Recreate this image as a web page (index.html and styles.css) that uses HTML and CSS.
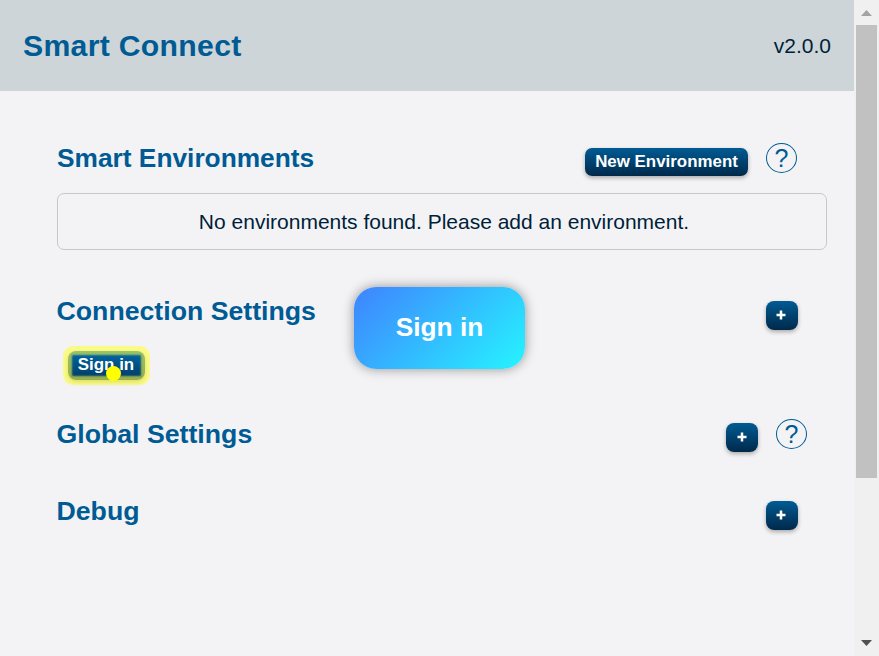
FILE: index.html
```html
<!DOCTYPE html>
<html lang="en">
<head>
<meta charset="utf-8">
<title>Smart Connect</title>
<link rel="stylesheet" href="styles.css">
</head>
<body>
<div class="app">
  <div class="page">
    <header class="header">
      <h1>Smart Connect</h1>
      <span class="version">v2.0.0</span>
    </header>
    <main>
      <section class="row environments">
        <h2>Smart Environments</h2>
        <button class="btn new">New Environment</button>
        <span class="help">?</span>
      </section>
      <div class="empty">No environments found. Please add an environment.</div>
      <section class="row connection">
        <h2>Connection Settings</h2>
        <button class="btn plus"><svg viewBox="0 0 10 10"><path d="M5 .5v9M.5 5h9"/></svg></button>
      </section>
      <div class="signin-row"><button class="btn signin">Sign in</button></div>
      <section class="row global">
        <h2>Global Settings</h2>
        <button class="btn plus"><svg viewBox="0 0 10 10"><path d="M5 .5v9M.5 5h9"/></svg></button>
        <span class="help">?</span>
      </section>
      <section class="row debug">
        <h2>Debug</h2>
        <button class="btn plus"><svg viewBox="0 0 10 10"><path d="M5 .5v9M.5 5h9"/></svg></button>
      </section>
    </main>
  </div>
  <div class="scrollbar">
    <svg class="arrow up" viewBox="0 0 11 6"><path d="M0 6L5.5 0L11 6z"/></svg>
    <div class="thumb"></div>
    <svg class="arrow down" viewBox="0 0 11 6"><path d="M0 0L5.5 6L11 0z"/></svg>
  </div>
</div>
<div class="highlight"></div>
<div class="pointer"></div>
<div class="callout">Sign in</div>
</body>
</html>
```
FILE: styles.css
```css
* { box-sizing: border-box; }
body {
  margin: 0;
  background: #f3f3f6;
  color: #001e38;
  font-family: "Liberation Sans", Arial, sans-serif;
  overflow: hidden;
}
h1, h2 { margin: 0; color: #005b94; font-weight: 700; white-space: nowrap; }
.app { display: flex; height: 656px; }
.page { flex: 1; }
.header {
  height: 91px;
  padding: 0 23px 0 23px;
  display: flex;
  align-items: center;
  justify-content: space-between;
  background: #cdd5d8;
}
h1 { font-size: 30.2px; letter-spacing: .3px; }
.version { font-size: 21px; padding-top: 1px; }
main { padding: 44px 27px 0 57px; }
.row { display: flex; align-items: flex-start; }
h2 { flex: 1; font-size: 26.8px; line-height: 30px; padding-top: 8px; }
.environments { height: 58px; padding-right: 30px; }
.environments h2 { font-size: 26.3px; }
.connection { height: 54px; padding-right: 30px; margin-top: 38px; }
.connection h2, .global h2, .debug h2 { margin-left: -.5px; padding-top: 8px; font-size: 26.7px; }
.global { height: 77px; padding-right: 20px; }
.debug { padding-right: 30px; }
.btn {
  border: 0;
  padding: 0;
  border-radius: 8px;
  color: #fff;
  font: bold 16.9px/27px "Liberation Sans", Arial, sans-serif;
  background: linear-gradient(#005b94, #00294a);
  box-shadow: 0 2px 4px rgba(0, 0, 0, .3);
}
.new { width: 163px; height: 28px; margin-top: 13px; padding-bottom: 1px; border-radius: 7px; }
.plus {
  width: 32px;
  height: 29px;
  margin: 13px -1px 0 0;
  padding: 0 2px 1px 0;
  display: flex;
  align-items: center;
  justify-content: center;
}
.plus svg { width: 10px; height: 10px; }
.plus path { stroke: #fff; stroke-width: 2.5; }
.global .plus { margin: 12px 0 0; padding-right: 1px; }
.help {
  width: 31px;
  height: 30px;
  margin: 8px 0 0 18px;
  border: 1px solid #005b94;
  border-radius: 50%;
  color: #005b94;
  font-size: 25px;
  line-height: 28px;
  text-align: center;
}
.empty {
  height: 57px;
  border: 1px solid #c8c8cc;
  border-radius: 7px;
  padding-left: 4px;
  font-size: 21px;
  line-height: 56px;
  text-align: center;
}
.signin-row { height: 69px; padding: 9px 0 0 11px; }
.signin {
  display: block;
  width: 77px;
  height: 29px;
  padding: 0 1px 2px 0;
  background: linear-gradient(#006aa8, #003861);
}
.scrollbar {
  width: 25px;
  background: #f0f0f0;
  display: flex;
  flex-direction: column;
  align-items: center;
}
.arrow { width: 11px; height: 6px; }
.up { fill: #a3a3a3; margin: 10px 0 9px; }
.thumb { width: 21px; height: 453px; background: #c1c1c1; }
.down { fill: #505050; margin-top: auto; margin-bottom: 10px; }
.highlight {
  position: absolute;
  left: 63px;
  top: 346px;
  width: 87px;
  height: 39px;
  border-radius: 10px;
  box-shadow: inset 0 0 2px 9px rgba(255, 255, 60, .6);
}
.pointer {
  position: absolute;
  left: 106px;
  top: 366px;
  width: 15px;
  height: 15px;
  border-radius: 50%;
  background: #ff0;
}
.callout {
  position: absolute;
  left: 354px;
  top: 287px;
  width: 171px;
  height: 82px;
  border-radius: 22px;
  background: linear-gradient(135deg, #3f83ff, #26f4ff);
  box-shadow: 0 0 12px rgba(0, 0, 0, .4);
  color: #fff;
  font-size: 26.3px;
  font-weight: 700;
  line-height: 80px;
  text-align: center;
}
```
